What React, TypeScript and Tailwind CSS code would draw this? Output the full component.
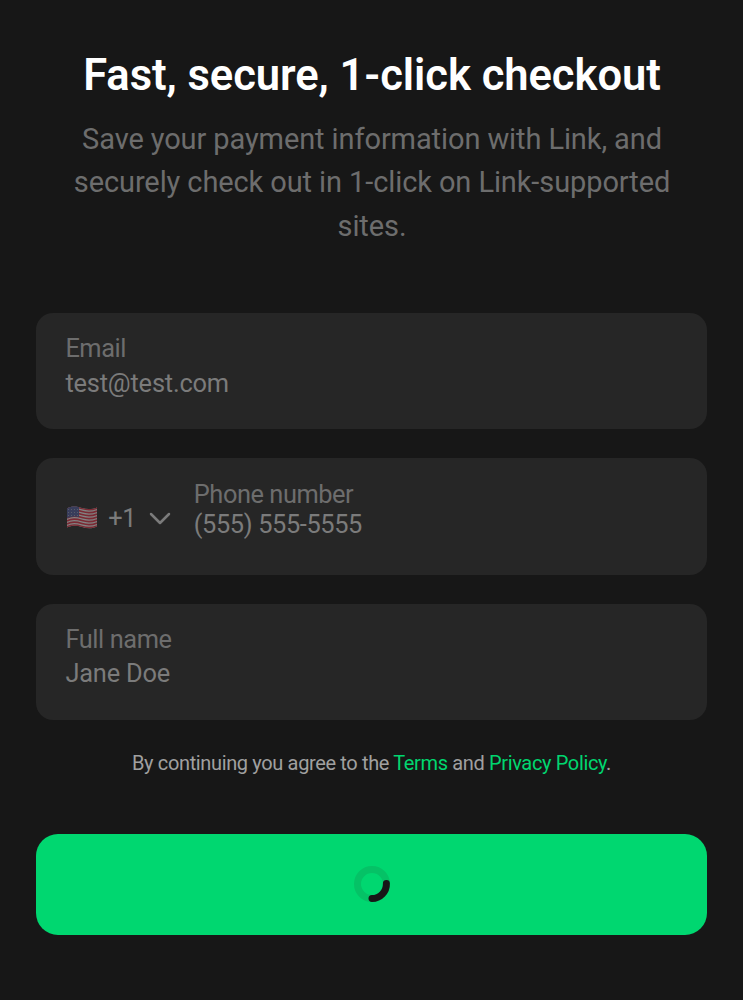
import React from "react";

function Flag() {
  return (
    <svg width="31" height="23" viewBox="0 0 31 23" className="opacity-50">
      <defs><clipPath id="flag"><path d="M1 2.5C6 -.5 11 .5 16 2S26 3.5 31 1.5V20.5C26 23 21 22.5 16 21S6 19 1 21.5Z" /></clipPath></defs>
      <g clipPath="url(#flag)">
        <rect width="31" height="24" fill="#ddd" />
        {[0, 1, 2, 3, 4, 5, 6].map((i) => (
          <path key={i} d={`M1 ${3 + i * 3}c5 -3 10 -2 15 -.5s10 1.5 15 -.5`} stroke="#cf2f42" strokeWidth="1.7" fill="none" />
        ))}
        <path d="M0 0H13V11Q7 9.5 0 12.5Z" fill="#4a5590" />
        {[3.5, 6.5, 9.5].map((y) => <path key={y} d={`M2 ${y}H12`} stroke="#aab" strokeWidth=".7" strokeDasharray="1 2" />)}
      </g>
    </svg>
  );
}

export default function App() {
  return (
    <main className="flex h-[1000px] w-[743px] flex-col bg-[#171717] px-[36.4px] pt-[50px] font-[Roboto,sans-serif]">
      <h1 className="pl-px text-center text-[43.5px] leading-[52px] font-semibold tracking-[-0.05px] whitespace-nowrap text-white">Fast, secure, 1-click checkout</h1>
      <p className="mt-[15.5px] pl-px text-center text-[29px] leading-[43.5px] tracking-[-0.1px] text-[#6d6d6d]">
        Save your payment information with Link, and<br />securely check out in 1-click on Link-supported<br />sites.
      </p>
      <section className="mt-[65.2px] flex flex-col gap-[29px] text-[25.4px] leading-[30px] text-[#6d6d6d]">
        <div className="h-[116.3px] rounded-[17px] bg-[#262626] px-[29px] pt-5">
          <div className="tracking-[-0.45px]">Email</div><div className="mt-[5px] tracking-[-0.18px] text-[#7b7b7b]">test@test.com</div>
        </div>
        <div className="flex h-[116.3px] rounded-[17px] bg-[#262626] pl-[29.4px]">
          <div className="flex h-[119px] w-[128px] items-center text-[#7b7b7b]">
            <Flag /><span className="ml-[11.5px] tracking-[-0.4px]">+1</span>
            <svg className="mt-[2px] ml-[13px]" width="22" height="14" viewBox="0 0 22 14" fill="none" stroke="currentColor" strokeWidth="2.5" strokeLinecap="round" strokeLinejoin="round"><path d="M2 2L11 11L20 2" /></svg>
          </div>
          <div className="pt-[20.5px] tracking-[-0.45px]"><div>Phone number</div><div className="tracking-[-0.38px] text-[#7b7b7b]">(555) 555-5555</div></div>
        </div>
        <div className="h-[116.3px] rounded-[17px] bg-[#262626] px-[29px] pt-5">
          <div className="tracking-[-0.42px]">Full name</div><div className="mt-[4.3px] tracking-[-0.2px] text-[#7b7b7b]">Jane Doe</div>
        </div>
      </section>
      <p className="mt-[29.7px] text-center text-[20px] leading-[26px] tracking-[-0.36px] text-[#a0a0a0]">
        By continuing you agree to the <span className="text-[#00d66f]">Terms</span> and <span className="text-[#00d66f]">Privacy Policy</span>.
      </p>
      <button aria-label="Loading" className="mt-[58px] flex h-[101px] items-center justify-center rounded-[22px] bg-[#00d770]">
        <svg width="38" height="38" viewBox="0 0 38 38" fill="none" strokeWidth="7"><circle cx="19" cy="19" r="14.5" stroke="#05c266" /><path d="M33.4 18.6A14.5 14.5 0 0 1 19 33.5" stroke="#171717" strokeLinecap="round" /></svg>
      </button>
    </main>
  );
}
